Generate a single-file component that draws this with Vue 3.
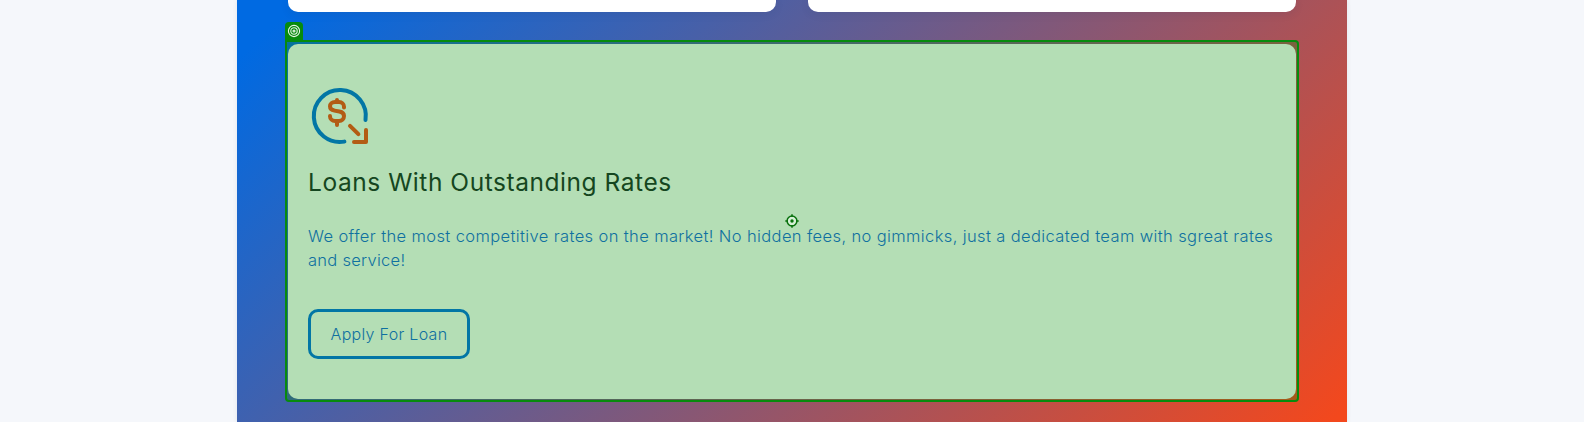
<script setup>
const lines = [
  'We offer the most competitive rates on the market! No hidden fees, no gimmicks, just a dedicated team with sgreat rates',
  'and service!'
]
</script>

<template>
  <main class="page">
    <section class="section">
      <div class="row">
        <div class="card"></div>
        <div class="card"></div>
      </div>
      <article class="loan">
        <div class="outline"></div>
        <div class="fill"></div>
        <span class="tag">
          <svg width="14" height="14" viewBox="0 0 14 14" fill="none" stroke="#e6f5e6" stroke-width="1.1">
            <circle cx="7" cy="7" r="5.6" /><circle cx="7" cy="7" r="3.2" /><circle cx="7" cy="7" r="1" />
          </svg>
        </span>
        <div class="content">
          <svg class="icon" width="64" height="64" viewBox="0 0 64 64" fill="none" stroke-width="4" stroke-linecap="round" stroke-linejoin="round">
            <path stroke="#0276a5" d="M57.5 36A26 26 0 1 0 36.4 57.6" />
            <g stroke="#b35c14">
              <path d="M36 23.5v-.8c0-2.7-2.2-4.7-4.9-4.7H27c-2.9 0-5 1.8-5 4.3 0 2.4 1.7 3.9 4.4 4.3l5 .9c2.8.5 4.6 2.1 4.6 4.6 0 2.8-2.1 4.9-5 4.9h-4c-2.8 0-5-2.1-5-4.7v-.4M29 17.5V16M29 37.5V41" />
              <path d="m42 41.8 8.4 8.4M58 46v12H46" />
            </g>
          </svg>
          <h2>Loans With Outstanding Rates</h2>
          <p><span v-for="(line, i) in lines" :key="i" :class="'line line-' + i">{{ line }}</span></p>
          <a class="button"><span>Apply For Loan</span></a>
        </div>
        <svg class="pivot" width="14" height="14" viewBox="0 0 14 14" fill="none" stroke="#08700c">
          <circle cx="7" cy="7" r="4.9" fill="#d6f0d6" stroke-width="1.5" />
          <path d="M7 .3V3M7 11v2.7M.3 7H3M11 7h2.7" stroke-width="1.5" />
          <circle cx="7" cy="7" r="1.7" fill="#08700c" stroke="none" />
        </svg>
      </article>
    </section>
  </main>
</template>

<style>
body { background: #f5f7fb; overflow: hidden; }
</style>

<style scoped>
.page { display: flex; justify-content: center; height: 422px; overflow: hidden; font-family: Inter, "Open Sans", sans-serif; background: #f5f7fb; }
.section { box-sizing: border-box; width: 1110px; height: 422px; padding: 0 51px; background: linear-gradient(136deg, #006ae2 4%, #f3481d 99%); box-shadow: 0 0 5px rgba(30, 50, 80, .09); }
.row { display: flex; gap: 32px; height: 12px; margin-bottom: 32px; }
.card { flex: 1; background: #fff; border-radius: 0 0 10px 10px; box-shadow: 0 2px 8px rgba(40, 60, 100, .12); }
.loan { position: relative; height: 355px; }
.outline { position: absolute; inset: -4px -3px -3px; box-sizing: border-box; border: 2px solid #078b0d; border-radius: 0 4px 4px 4px; background: rgba(5, 135, 8, .3); }
.fill { position: absolute; inset: 0; border-radius: 10px; background: #b4deb5; }
.tag { position: absolute; left: -3px; top: -22px; width: 18px; height: 19px; box-sizing: border-box; padding: 2px; border-radius: 4px 4px 0 0; background: #078b0d; }
.tag svg, .icon { display: block; }
.pivot { position: absolute; left: 497px; top: 170px; }
.content { position: relative; padding: 40px 20px; }
h2 { margin: 19px 0 0; font-size: 24.5px; line-height: 30px; font-weight: 420; color: #154620; letter-spacing: .55px; white-space: nowrap; }
p { margin: 27px 0 0; font-size: 16.5px; line-height: 24px; font-weight: 300; color: #0f70a0; }
.line { display: block; white-space: nowrap; letter-spacing: .38px; }
.line-1 { letter-spacing: .27px; }
.button { display: flex; align-items: center; justify-content: center; box-sizing: border-box; width: 162px; height: 50px; margin-top: 37px; padding-bottom: 1px; border: 3px solid #0276a5; border-radius: 10px; color: #0f70a0; font-size: 16px; font-weight: 300; letter-spacing: .3px; white-space: nowrap; }
</style>
